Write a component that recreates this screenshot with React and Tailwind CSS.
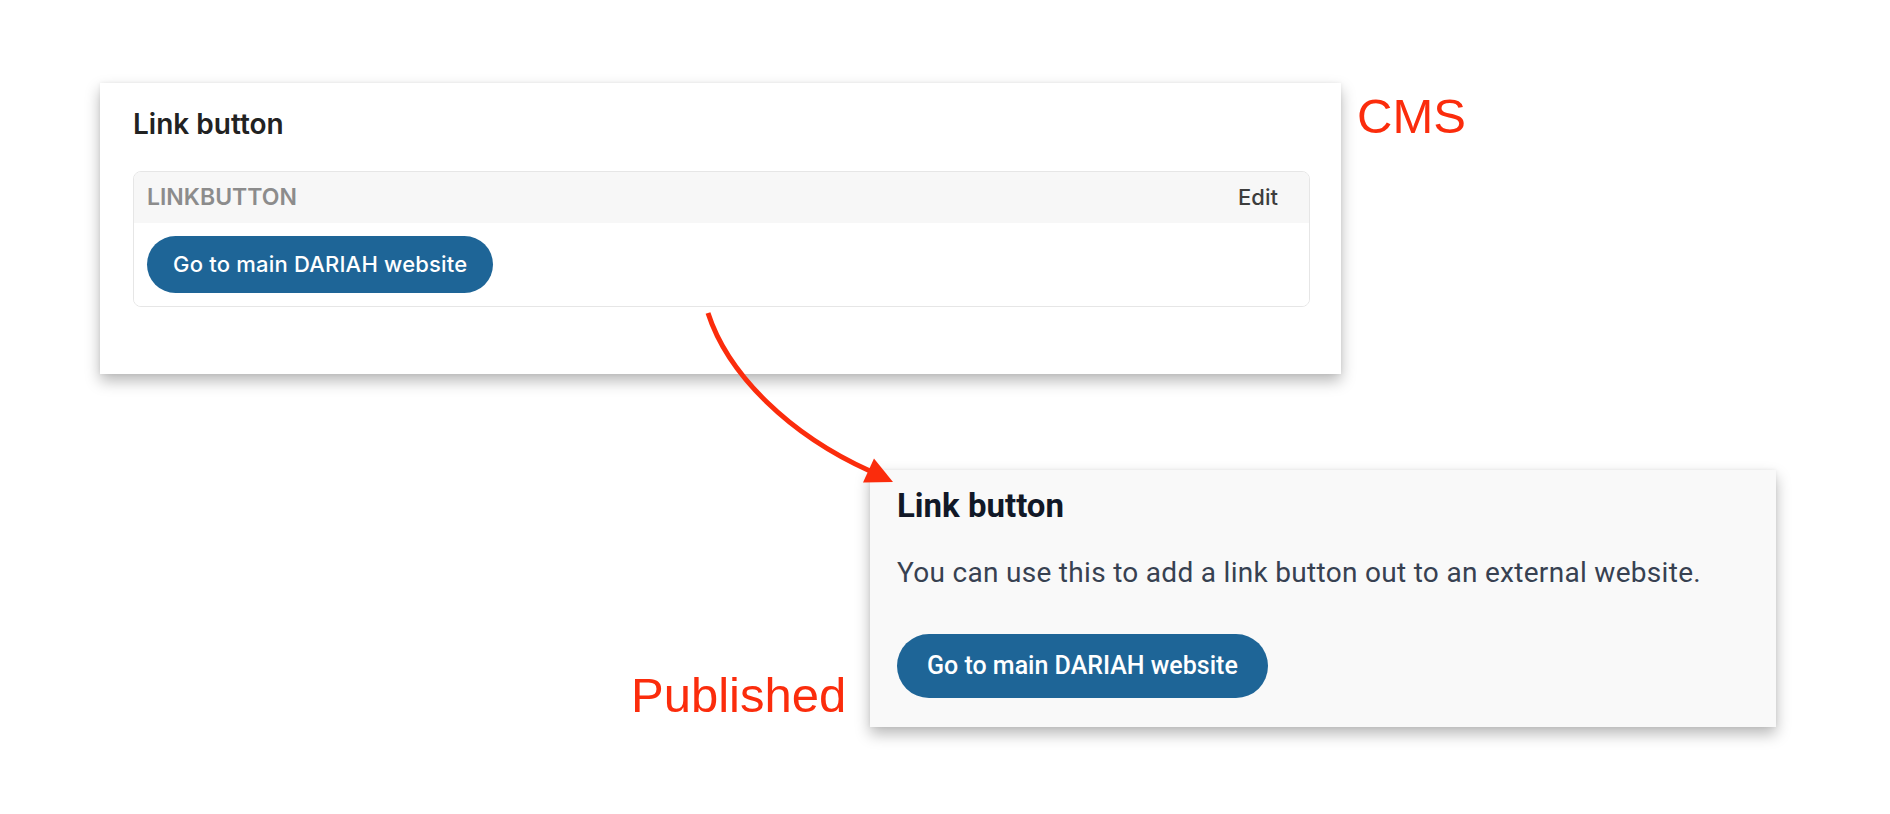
import React from "react";

function Arrow() {
  return (
    <svg
      className="absolute left-0 top-0 pointer-events-none"
      width="1890"
      height="814"
      viewBox="0 0 1890 814"
    >
      <path
        d="M708 313 C728 375, 790 435, 870 471"
        fill="none"
        stroke="#fb2c0c"
        strokeWidth="5"
        strokeLinecap="butt"
      />
      <polygon points="893,482 874,458.5 863,482.5" fill="#fb2c0c" />
    </svg>
  );
}

export default function App() {
  return (
    <div className="relative w-[1890px] h-[814px] bg-white overflow-hidden">
      {/* CMS row */}
      <div className="flex items-start pt-[83px] pl-[100px]">
        <div className="w-[1241px] h-[291px] bg-white shadow-[0_7px_14px_rgba(0,0,0,0.28),0_0_4px_rgba(0,0,0,0.06)] pt-[24px] pl-[33px] pr-[31px] font-['Inter',sans-serif]">
          <h2 className="text-[28px] leading-[34px] font-semibold text-[#222222]">
            Link button
          </h2>
          <div className="mt-[30px] border border-[#e6e6e6] rounded-[8px] overflow-hidden">
            <div className="h-[51px] bg-[#f7f7f7] flex items-center justify-between pl-[13px] pr-[31px]">
              <span className="text-[23px] font-semibold text-[#8c8c8c]">
                LINKBUTTON
              </span>
              <span className="text-[22px] font-medium text-[#3d3d3d]">Edit</span>
            </div>
            <div className="bg-white pt-[13px] pb-[13px] pl-[13px]">
              <button className="h-[57px] px-[26px] rounded-full bg-[#1e6597] text-white text-[22px] tracking-[0.2px] font-medium">
                Go to main DARIAH website
              </button>
            </div>
          </div>
        </div>
        <div className="ml-[16px] mt-[9px] text-[49px] leading-[48px] text-[#fb2c0c] font-['Liberation_Sans',Arial,sans-serif]">
          CMS
        </div>
      </div>

      {/* Published row */}
      <div className="flex items-start mt-[96px] ml-[631px]">
        <div className="w-[239px] mt-[201px] text-[49px] leading-[48px] text-[#fb2c0c] font-['Liberation_Sans',Arial,sans-serif]">
          Published
        </div>
        <div className="w-[906px] h-[257px] bg-[#f9f9f9] shadow-[0_7px_14px_rgba(0,0,0,0.28),0_0_4px_rgba(0,0,0,0.06)] pt-[16px] pl-[27px] font-['Roboto',sans-serif]">
          <h2 className="text-[33px] leading-[40px] font-bold text-[#111827]">
            Link button
          </h2>
          <p className="mt-[29px] text-[28px] leading-[36px] tracking-[0.3px] text-[#374151]">
            You can use this to add a link button out to an external website.
          </p>
          <button className="mt-[43px] h-[64px] px-[30px] rounded-full bg-[#1e6597] text-white text-[25px] font-medium">
            Go to main DARIAH website
          </button>
        </div>
      </div>

      <Arrow />
    </div>
  );
}
